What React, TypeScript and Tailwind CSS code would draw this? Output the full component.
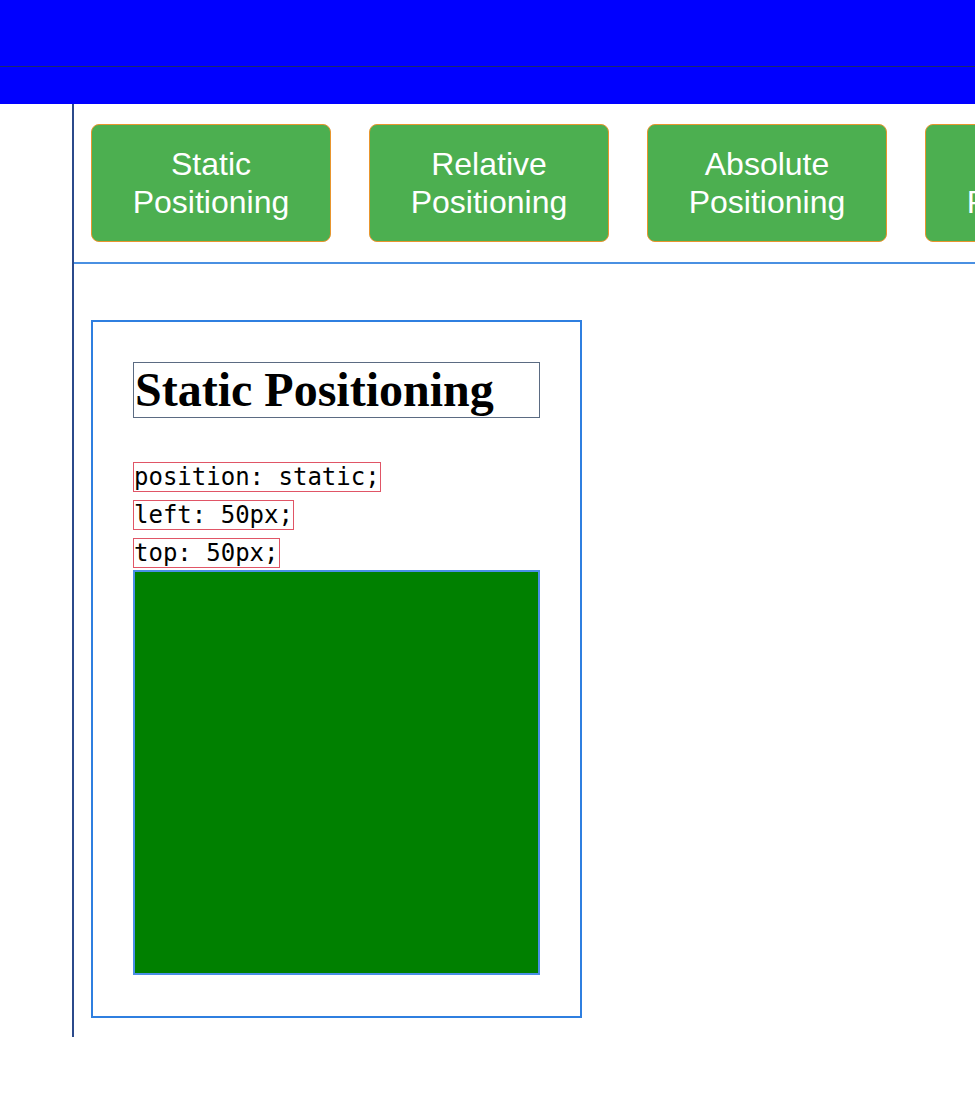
const NAV_ITEMS = ['Static Positioning', 'Relative Positioning', 'Absolute Positioning', 'Fixed Positioning'];

const CODE_LINES = ['position: static;', 'left: 50px;', 'top: 50px;'];

export default function App() {
  return (
    <div className="min-h-screen bg-white overflow-hidden">
      {/* Header bar */}
      <header className="h-[104px] bg-[#0000ff]">
        <div className="h-[67px] border-b border-[#1f2a6b]" />
      </header>

      <div className="ml-[72px] border-l-2 border-[#2b4a8b] pb-[19px]">
        {/* Nav buttons */}
        <nav className="flex gap-[38px] pl-[17px] pt-5 pb-5 border-b-2 border-[#4a90e2]">
          {NAV_ITEMS.map((label) => (
            <button
              key={label}
              className="shrink-0 w-[240px] h-[118px] flex items-center justify-center rounded-lg border border-[#e8952e] bg-[#4caf50] text-white text-[32px] leading-[38px] font-['Liberation_Sans',Arial,sans-serif] text-center"
            >
              <span className="w-[200px]">{label}</span>
            </button>
          ))}
        </nav>

        {/* Demo card */}
        <div className="pl-[17px] pt-[56px]">
          <div className="w-[491px] border-2 border-[#2f7fe0] px-10 pt-10 pb-[41px]">
            <h1 className="border border-[#5b6b82] pl-[1px] h-[56px] text-[48px] leading-[54px] font-bold text-black font-['Liberation_Serif','Times_New_Roman',serif]">
              Static Positioning
            </h1>

            <div className="mt-[44px] flex flex-col items-start gap-2 font-['DejaVu_Sans_Mono',monospace] text-[24px] leading-[28px] text-black">
              {CODE_LINES.map((line) => (
                <span key={line} className="border border-[#e05566]">
                  {line}
                </span>
              ))}
            </div>

            <div className="mt-[2px] h-[405px] w-full border-2 border-[#4a8fe6] bg-[#008000]" />
          </div>
        </div>
      </div>
    </div>
  );
}
